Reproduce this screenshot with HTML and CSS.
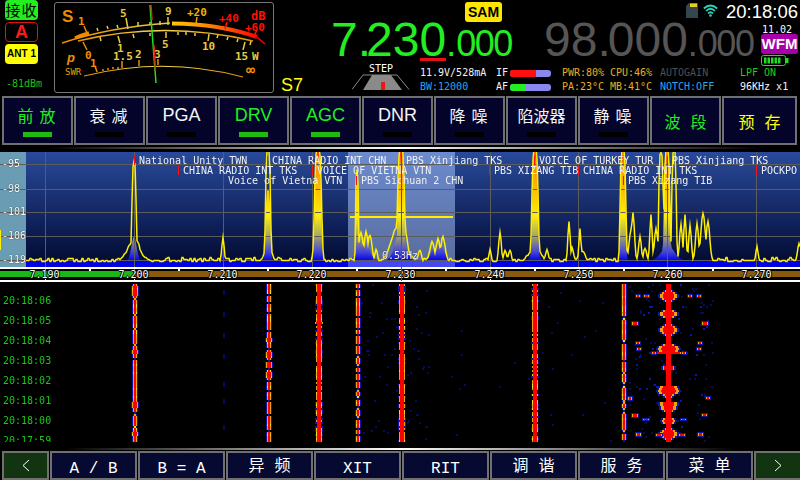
FILE: index.html
```html
<!DOCTYPE html>
<html lang="zh">
<head>
<meta charset="utf-8">
<title>SDR Transceiver</title>
<link rel="stylesheet" href="styles.css">
</head>
<body>
<div class="app">
  <header class="header">
    <div class="status">
      <div class="pill pill-rx">接收</div>
      <div class="pill pill-vfo">A</div>
      <div class="pill pill-ant">ANT 1</div>
      <div class="dbm">-81dBm</div>
    </div>
    <div class="meter">
      <svg class="meter-svg" viewBox="55 3 218 89" width="218" height="89">
        <defs>
          <linearGradient id="arcS" gradientUnits="userSpaceOnUse" x1="62" y1="0" x2="170" y2="0"><stop offset="0" stop-color="#f08a00"/><stop offset="1" stop-color="#e8d040"/></linearGradient>
          <linearGradient id="arcHot" gradientUnits="userSpaceOnUse" x1="172" y1="0" x2="258" y2="0"><stop offset="0" stop-color="#ffc800"/><stop offset="0.45" stop-color="#ff8000"/><stop offset="1" stop-color="#ff0000"/></linearGradient>
          <linearGradient id="arcP" gradientUnits="userSpaceOnUse" x1="78" y1="0" x2="253" y2="0"><stop offset="0" stop-color="#e89000"/><stop offset="0.45" stop-color="#f0d850"/><stop offset="1" stop-color="#e89000"/></linearGradient>
          <linearGradient id="arcSwr" gradientUnits="userSpaceOnUse" x1="84" y1="0" x2="243" y2="0"><stop offset="0" stop-color="#e89000"/><stop offset="0.5" stop-color="#f0d850"/><stop offset="1" stop-color="#e89000"/></linearGradient>
        </defs>
        <path class="a-s" d="M62 43 Q110 27 170 23"/>
        <path class="a-orange" d="M75 38 Q82 35 89 33"/>
        <path class="a-hot" d="M172 23.500 Q220 24 257 37"/>
        <path class="a-red" d="M257 37 L265 44"/>
        <path class="a-p" d="M78 41 Q165 20 253 41"/>
        <path class="a-swr" d="M84 76 Q165 56 243 77"/>
        <path class="t-orange" d="M87 33 L84 26 M83 42 L87 50"/>
        <path class="t-yellow" d="M128 29 L126 18 M168 25 L168 17 M160 25 L160 21 M150 25 L150 22 M98 31 L97 28 M108 29 L107 26 M118 28 L117 25 M138 26 L138 22 M118 36 L120 43 M166 32 L166 38 M100 37 L101 41 M133 34 L134 38 M150 33 L150 36"/>
        <path class="t-yellow" d="M178 32 L178 35 M186 32 L186 35 M195 33 L195 36 M209 34 L208 41 M218 35 L217 38 M228 37 L227 40 M238 39 L237 42 M245 42 L243 50 M251 41 L250 45"/>
        <path class="t-orange2" d="M196 24 L197 17"/>
        <path class="t-red" d="M225 29 L227 22 M253 38 L257 30"/>
        <path class="t-orange" d="M97 72 L95 66 M122 68 L122 61 M139 66 L139 60 M158 65 L158 59 M103 71 L103 69 M108 70 L108 68 M113 69 L113 67 M118 69 L118 67"/>
        <text class="m s-big" x="62" y="22">S</text>
        <text class="m or" x="78" y="25">1</text>
        <text class="m ye" x="120" y="17">5</text>
        <text class="m ye" x="165" y="15">9</text>
        <text class="m gold" x="187" y="16">+20</text>
        <text class="m red" x="219" y="22">+40</text>
        <text class="m red db" x="251" y="20">dB</text>
        <text class="m red" x="245" y="31">+60</text>
        <text class="m or p" x="67" y="62">p</text>
        <text class="m or" x="85" y="59">0</text>
        <text class="m ye" x="117" y="52">1</text>
        <text class="m ye" x="162" y="48">5</text>
        <text class="m ye" x="202" y="50">10</text>
        <text class="m ye" x="235" y="60">15</text>
        <text class="m ye" x="252" y="60">W</text>
        <text class="swr" x="65" y="75">SWR</text>
        <text class="m or" x="90" y="67">1</text>
        <text class="m ye" x="113" y="60">1.5</text>
        <text class="m ye" x="135" y="58">2</text>
        <text class="m ye" x="154" y="58">3</text>
        <text class="m or inf" x="246" y="75">∞</text>
        <path class="needle-g" d="M150 5 L156 83"/>
        <path class="needle-r" d="M151 5 L152 20 M154 45 L155.500 71"/>
      </svg>
    </div>
    <div class="panel">
      <div class="topline">
        <div class="mode-sam">SAM</div>
        <svg class="sd" viewBox="0 0 12 15" width="12" height="15"><path d="M3 0 H12 V15 H0 V3 Z" fill="#36464e"/><path d="M4 0.500 H11 V4 H4 Z" fill="#e8d020"/></svg>
        <svg class="wifi" viewBox="0 0 15 13" width="15" height="13"><g fill="none" stroke="#2fd2bd" stroke-width="1.700"><path d="M0.800 4.500 Q7.500 -1.500 14.200 4.500"/><path d="M3 7 Q7.500 2.500 12 7"/><path d="M5 9.500 Q7.500 7 10 9.500"/></g><circle cx="7.500" cy="11.500" r="1.300" fill="#2fd2bd"/></svg>
        <div class="clock">20:18:06</div>
      </div>
      <div class="freqline">
        <div class="freq freq-a"><span>7</span><span class="dot-a">.</span><span>23</span><span class="tuned">0</span><span class="sub"><span class="dot-sub">.</span>000</span></div>
        <div class="freq freq-b"><span>98</span><span class="dot-b">.</span><span>000</span><span class="sub"><span class="dot-sub">.</span>000</span></div>
        <div class="side">
          <div class="ver">11.02</div>
          <div class="mode-wfm">WFM</div>
          <svg class="battery" viewBox="0 0 28 11" width="28" height="11"><rect x="0.500" y="0.500" width="24" height="10" rx="2" fill="none" stroke="#22dd22"/><rect x="25" y="3" width="2.500" height="5" fill="#22dd22"/><g fill="#22dd22"><rect x="3" y="2.500" width="2.500" height="6"/><rect x="6.500" y="2.500" width="2.500" height="6"/><rect x="10" y="2.500" width="2.500" height="6"/><rect x="13.500" y="2.500" width="2.500" height="6"/><rect x="17" y="2.500" width="2.500" height="6"/></g></svg>
        </div>
      </div>
      <div class="infoline">
        <div class="s7">S7</div>
        <div class="step">
          <div class="step-label">STEP</div>
          <svg viewBox="0 0 58 16" width="58" height="16"><path d="M0 15.500 L11 1 H45 L57 15.500" fill="none" stroke="#888"/><path d="M11 16 L20 1 H39 L50 16 Z" fill="#8a8a8a"/><rect x="29" y="8" width="4" height="8" fill="#ff1010"/></svg>
        </div>
        <div class="stats">
          <span class="t-white">11.9V/528mA</span>
          <span class="t-white lvl">IF<i class="bar"><b class="seg-if"></b></i></span>
          <span class="t-gold">PWR:80%</span>
          <span class="t-gold">CPU:46%</span>
          <span class="t-dim">AUTOGAIN</span>
          <span class="t-green">LPF ON</span>
          <span class="t-blue">BW:12000</span>
          <span class="t-white lvl">AF<i class="bar"><b class="seg-af"></b></i></span>
          <span class="t-gold">PA:23°C</span>
          <span class="t-gold">MB:41°C</span>
          <span class="t-blue">NOTCH:OFF</span>
          <span class="t-white">96KHz x1</span>
        </div>
      </div>
    </div>
  </header>

  <nav class="keys">
    <button class="key on"><span class="cjk">前放</span><i class="ind"></i></button>
    <button class="key"><span class="cjk">衰减</span><i class="ind"></i></button>
    <button class="key"><span class="latin">PGA</span><i class="ind"></i></button>
    <button class="key on"><span class="latin">DRV</span><i class="ind"></i></button>
    <button class="key on"><span class="latin">AGC</span><i class="ind"></i></button>
    <button class="key"><span class="latin">DNR</span><i class="ind"></i></button>
    <button class="key"><span class="cjk">降噪</span><i class="ind"></i></button>
    <button class="key"><span class="cjk tight">陷波器</span><i class="ind"></i></button>
    <button class="key"><span class="cjk">静噪</span><i class="ind"></i></button>
    <button class="key plain key-band"><span class="cjk wide">波段</span></button>
    <button class="key plain key-preset"><span class="cjk wide">预存</span></button>
  </nav>
  <div class="fade"></div>

  <section class="scope">
    <div class="spectrum">
      <canvas id="spec" width="800" height="116"></canvas>
      <div class="lvl-lab l1">-95</div>
      <div class="lvl-lab l2">-98</div>
      <div class="lvl-lab l3">-101</div>
      <div class="lvl-lab l4">-106</div>
      <div class="lvl-lab l5">-119</div>
      <div class="st r1 c134">National Unity TWN</div>
      <div class="st r1 c267">CHINA RADIO INT CHN</div>
      <div class="st r1 c401">PBS Xinjiang TKS</div>
      <div class="st r1 c534">VOICE OF TURKEY TUR</div>
      <div class="st r1 c667">PBS Xinjiang TKS</div>
      <div class="st r2 c178">CHINA RADIO INT TKS</div>
      <div class="st r2 c312">VOICE OF VIETNA VTN</div>
      <div class="st r2 c489">PBS XIZANG TIB</div>
      <div class="st r2 c578">CHINA RADIO INT TKS</div>
      <div class="st r2 c756">POCKPO</div>
      <div class="st r3 c223">Voice of Vietna VTN</div>
      <div class="st r3 c356">PBS Sichuan 2 CHN</div>
      <div class="st r3 c623">PBS Xizang TIB</div>
      <div class="offset">0.58Hz</div>
    </div>
    <div class="scale">
      <div class="scale-band"></div>
      <div class="scale-labels">
        <span>7.190</span><span>7.200</span><span>7.210</span><span>7.220</span><span>7.230</span><span>7.240</span><span>7.250</span><span>7.260</span><span>7.270</span>
      </div>
    </div>
    <div class="cursor"></div>
  </section>

  <section class="waterfall">
    <canvas id="fall" width="800" height="158"></canvas>
    <div class="times">
      <span>20:18:06</span><span>20:18:05</span><span>20:18:04</span><span>20:18:03</span><span>20:18:02</span><span>20:18:01</span><span>20:18:00</span><span>20:17:59</span>
    </div>
  </section>
  <div class="fade fade-low"></div>

  <nav class="softkeys">
    <button class="soft nav"><svg viewBox="0 0 8 13" width="8" height="13"><path d="M7 1 L1 6.500 L7 12" fill="none" stroke="#fff"/></svg></button>
    <button class="soft">A / B</button>
    <button class="soft">B = A</button>
    <button class="soft cjk-soft">异频</button>
    <button class="soft">XIT</button>
    <button class="soft">RIT</button>
    <button class="soft cjk-soft">调谐</button>
    <button class="soft cjk-soft">服务</button>
    <button class="soft cjk-soft">菜单</button>
    <button class="soft nav nav-r"><svg viewBox="0 0 8 13" width="8" height="13"><path d="M1 1 L7 6.500 L1 12" fill="none" stroke="#fff"/></svg></button>
  </nav>
</div>
<script src="script.js"></script>
</body>
</html>
```
FILE: styles.css
```css
* { box-sizing: border-box; margin: 0; padding: 0; }
html, body { width: 800px; height: 480px; overflow: hidden; background: #000; }
body { font-family: "DejaVu Sans Mono", monospace; font-size: 10px; line-height: 10px; color: #fff; }
.app { width: 800px; height: 480px; display: flex; flex-direction: column; overflow: hidden; }
button { font: inherit; color: inherit; }
canvas { display: block; }

/* header */
.header { height: 95px; display: flex; flex: none; }
.status { width: 54px; flex: none; padding-left: 5px; display: flex; flex-direction: column; }
.pill { width: 33px; height: 20px; border-radius: 4px; display: flex; align-items: center; justify-content: center; margin-bottom: 2px; }
.pill-rx { background: #22ee22; color: #000; font: 15px/20px "Noto Sans CJK SC", sans-serif; letter-spacing: 1px; }
.pill-vfo { border: 1px solid #e01010; color: #ff1818; font: bold 18px/18px "Liberation Sans", sans-serif; }
.pill-ant { background: #ffff00; color: #000; font: bold 10px/20px "Liberation Sans", sans-serif; }
.dbm { color: #18c018; margin-top: 13px; margin-left: 1px; }
.meter { width: 220px; height: 91px; margin-top: 2px; flex: none; border: 1px solid #777; border-radius: 3px; }
.meter-svg { display: block; }
.meter-svg path { fill: none; }
.a-s { stroke: url(#arcS); stroke-width: 1.5; }
.a-orange { stroke: #f08a00; stroke-width: 3.5; }
.a-hot { stroke: url(#arcHot); stroke-width: 4; }
.a-red { stroke: #ff0000; stroke-width: 1.5; }
.a-p { stroke: url(#arcP); stroke-width: 1.5; }
.a-swr { stroke: url(#arcSwr); stroke-width: 1.2; }
.t-orange { stroke: #e89000; stroke-width: 1.5; }
.t-yellow { stroke: #e8cc40; stroke-width: 1.5; }
.t-orange2 { stroke: #f0a000; stroke-width: 1.5; }
.t-red { stroke: #ff1000; stroke-width: 1.5; }
.m { font: bold 11px "DejaVu Sans Mono", monospace; }
.or { fill: #f09000; }
.ye { fill: #e8c840; }
.gold { fill: #f0b000; }
.red { fill: #ff1000; }
.s-big { font: bold 17px "Liberation Sans", sans-serif; fill: #e88c00; }
.db { font-size: 12px; }
.p { font: italic bold 13px "Liberation Sans", sans-serif; }
.inf { font-size: 15px; }
.swr { font: 9px "DejaVu Sans Mono", monospace; fill: #e8a000; }
.needle-g { stroke: #22dd22; stroke-width: 1.5; }
.needle-r { stroke: #e82010; stroke-width: 1.5; }

.panel { flex: 1; display: flex; flex-direction: column; min-width: 0; }
.topline { height: 22px; display: flex; align-items: flex-start; padding-left: 191px; flex: none; }
.mode-sam { width: 37px; height: 20px; margin-top: 2px; background: #ffe600; color: #000; border-radius: 3px; font: bold 14px/20px "Liberation Sans", sans-serif; text-align: center; }
.sd { margin: 3px 0 0 184px; display: block; }
.wifi { margin: 4px 0 0 5px; display: block; }
.clock { margin: 2px 0 0 8px; font: 18.500px/20px "Liberation Sans", sans-serif; white-space: nowrap; }

.freqline { height: 44px; display: flex; flex: none; }
.freq { font: 48px/35px "Liberation Sans", sans-serif; white-space: nowrap; }
.freq-a { color: #22ee22; width: 213px; margin-left: 57px; }
.freq-b { color: #555; width: 217px; }
.dot-a { letter-spacing: -5px; }
.dot-b { letter-spacing: -3px; }
.sub { font-size: 36px; letter-spacing: -1.500px; }
.dot-sub { letter-spacing: 0; }
.tuned { position: relative; }
.tuned::after { content: ""; position: absolute; left: 1px; right: 0; top: 45px; height: 3px; background: #e81010; }
.side { width: 38px; display: flex; flex-direction: column; align-items: flex-start; }
.ver { height: 12px; padding: 3px 0 0 1px; }
.mode-wfm { width: 37px; height: 20px; background: #a800a8; border-radius: 3px; font: bold 15px/20px "Liberation Sans", sans-serif; text-align: center; }
.battery { margin-top: 1px; display: block; }

.infoline { flex: 1; display: flex; min-height: 0; }
.s7 { width: 78px; padding: 9px 0 0 7px; color: #ffff10; font: 18px/20px "Liberation Sans", sans-serif; flex: none; }
.step { width: 58px; flex: none; text-align: center; margin-top: -3px; }
.step-label { height: 11px; padding-top: 1px; }
.step svg { display: block; }
.stats { margin-left: 10px; display: grid; grid-template-columns: 76px 66px 48px 50px 80px auto; grid-template-rows: 14px 14px; align-items: center; white-space: nowrap; }
.t-white { color: #f4f4f4; }
.t-gold { color: #e8b020; }
.t-dim { color: #505050; }
.t-green { color: #18d018; }
.t-blue { color: #20a8f0; }
.lvl { display: flex; align-items: center; gap: 2px; }
.bar { width: 41px; height: 7px; border-radius: 3px; background: #8a88ee; overflow: hidden; display: block; }
.bar b { display: block; height: 7px; }
.seg-if { width: 26px; background: #ff1010; }
.seg-af { width: 16px; background: #22ee22; }

/* key row */
.keys { height: 50px; padding: 1px 0 0 2px; display: flex; gap: 1px; flex: none; }
.key { width: 71px; height: 49px; flex: none; border: 2px solid #707070; background: #04042a; color: #f4f4f4; display: flex; flex-direction: column; align-items: center; padding-top: 8px; }
.key.on { color: #20ee20; }
.key .cjk { font: 16px/18px "Noto Sans CJK SC", sans-serif; letter-spacing: 6px; height: 18px; padding-left: 4px; }
.key .cjk.tight { letter-spacing: 0; padding-left: 0; }
.key .latin { font: 18px/18px "Liberation Sans", sans-serif; height: 18px; }
.ind { width: 29px; height: 5px; background: #000; margin-top: 8px; display: block; }
.on .ind { background: #20bb10; }
.key.plain { justify-content: center; padding-top: 0; }
.key .cjk.wide { letter-spacing: 10px; padding-left: 10px; }
.key-band { color: #20ee20; }
.key-preset { color: #ffff10; width: 75px; }
.fade { height: 2px; margin: 2px 0 3px; flex: none; background: linear-gradient(90deg, #000 6%, #fff 50%, #000 95%); }

/* spectrum */
.scope { position: relative; flex: none; height: 130px; }
.spectrum { position: relative; height: 115px; overflow: hidden; }
.lvl-lab { position: absolute; left: 2px; height: 10px; text-shadow: 0 0 1px #000; }
.l1 { top: 7px; } .l2 { top: 32px; } .l3 { top: 55px; } .l4 { top: 79px; } .l5 { top: 103px; }
.st { position: absolute; white-space: nowrap; color: #f0f0f0; height: 10px; padding-left: 5px; }
.st::before { content: ""; position: absolute; left: 0; top: 0; width: 1px; height: 9px; background: #ff1010; }
.r1 { top: 4px; } .r2 { top: 14px; } .r3 { top: 24px; }
.c134 { left: 134px; } .c267 { left: 267px; } .c401 { left: 401px; } .c534 { left: 534px; } .c667 { left: 667px; }
.c178 { left: 178px; } .c312 { left: 312px; } .c489 { left: 489px; } .c578 { left: 578px; } .c756 { left: 756px; }
.c223 { left: 223px; } .c356 { left: 356px; } .c623 { left: 623px; }
.offset { position: absolute; left: 382px; top: 99px; color: #f0f0f0; text-shadow: 0 0 1px #223; }
.scale { height: 15px; position: relative; border-top: 2px solid #fff; border-bottom: 2px solid #fff; background:
  repeating-linear-gradient(90deg, #fff 0 1px, transparent 1px 44.500px) 45px 0 / 100% 2px no-repeat; }
.scale::after { content: ""; position: absolute; left: 45px; right: 0; bottom: 0; height: 2px; background: repeating-linear-gradient(90deg, #fff 0 1px, transparent 1px 89px); }
.scale-band { position: absolute; left: 0; right: 0; top: 2px; height: 6px; background: linear-gradient(90deg, #18b818 0 133px, #8a5a0c 133px); }
.scale-labels { position: relative; display: flex; height: 11px; align-items: center; z-index: 1; }
.scale-labels span { width: 89px; flex: none; text-align: center; text-shadow: 1px 0 0 #000, -1px 0 0 #000, 0 1px 0 #000, 0 -1px 0 #000; }
.cursor { position: absolute; left: 401px; top: 0; bottom: 1px; width: 1px; background: #ff1010; z-index: 2; }

/* waterfall */
.waterfall { position: relative; height: 158px; margin-top: 2px; flex: none; overflow: hidden; }
.times { position: absolute; left: 3px; top: 12px; display: flex; flex-direction: column; gap: 10px; color: #18c818; }
.times span { height: 10px; display: block; }
.fade-low { margin: 6px 0 1px; background: linear-gradient(90deg, #000 8%, #fff 50%, #000 92%); }

/* soft keys */
.softkeys { height: 29px; padding-left: 2px; display: flex; gap: 1px; flex: none; }
.soft { width: 87px; height: 29px; flex: none; border: 2px solid #707070; background: #060a30; color: #fff; font: 16px/24px "Liberation Mono", monospace; padding-top: 4px; text-align: center; }
.cjk-soft { font: 16px/20px "Noto Sans CJK SC", sans-serif; letter-spacing: 10px; padding: 0 0 3px 10px; }
.nav { width: 47px; background: #133410; display: flex; align-items: center; justify-content: center; padding: 0; }
.nav-r { width: 48px; }
.nav svg { display: block; }
```
FILE: script.js
```js
(function () {
  var seed = 20180;
  function rnd() {
    seed |= 0; seed = seed + 0x6D2B79F5 | 0;
    var t = Math.imul(seed ^ seed >>> 15, 1 | seed);
    t = t + Math.imul(t ^ t >>> 7, 61 | t) ^ t;
    return ((t ^ t >>> 14) >>> 0) / 4294967296;
  }

  /* spectrum */
  var spec = document.getElementById('spec').getContext('2d');
  var OY = 152; /* page y of canvas top */
  var bg = spec.createLinearGradient(0, 0, 0, 116);
  bg.addColorStop(0, '#284a9c'); bg.addColorStop(0.33, '#1c3476');
  bg.addColorStop(0.7, '#0c1c52'); bg.addColorStop(1, '#010828');
  spec.fillStyle = bg; spec.fillRect(0, 0, 800, 116);
  spec.fillStyle = '#6a9db3'; spec.fillRect(0, 0, 26, 116);
  spec.fillStyle = 'rgba(170,200,255,0.52)'; spec.fillRect(348, 0, 107, 116);

  var yellow = [[134,162,2.4],[134,238,8],[223,237,1.6],[268,148,2.8],[268,240,4],[318,148,4],[357,170,1.6],[361,232,3],[366,232,2.6],[370,234,2.6],
    [376,250,2],[401,148,4],[398,226,9],[405,232,3.5],[420,250,2],[432,241,3],[438,238,3],[443,237,3],[490,250,1.5],[500,233,1.8],[505,249,2],[510,250,2],
    [535,148,3.6],[535,245,7],[547,248,2],[569,220,1.6],[572,248,2],[580,228,1.3],[582,250,4],[623,148,3.2],[633,213,2],[631,228,2.5],[640,237,1.8],[651,215,1.6],[656,228,2.2],[661,152,2.6],
    [667,148,3.2],[674,150,2.6],[685,213,1.6],[681,225,2],[690,224,1.8],[697,223,2],[703,213,3],[708,222,2.5],[645,248,2],[757,247,1.5],[799,242,2]];
  var fill = [[134,236,3.5],[223,250,1.2],[268,190,3],[318,146,3.6],[357,170,1.5],[363,236,7],[401,146,3.6],[400,232,7],[438,240,7],[535,146,3.2],[535,240,4],[623,146,3],[667,146,3.4],[668,246,9]];
  function profile(list, floor, jit) {
    var out = [], last = 0;
    for (var x = 0; x <= 800; x++) {
      if (x % 2 === 0) last = (rnd() - 0.5) * jit;
      var y = floor + last;
      for (var i = 0; i < list.length; i++) {
        var p = list[i], d = (x - p[0]) / p[2];
        var d2 = d * d;
        var shape = p[1] < 200 ? Math.exp(-d2 * d2) : Math.exp(-d2);
        var v = floor - (floor - p[1]) * shape + last * 0.5;
        if (v < y) y = v;
      }
      out.push(y);
    }
    return out;
  }
  var fy = profile(fill, 260.5, 1);
  var grad = spec.createLinearGradient(0, 0, 0, 116);
  [[0,'#ff2000'],[0.1,'#ff8800'],[0.33,'#ffbe00'],[0.55,'#ffee10'],[0.72,'#a8a860'],[0.86,'#4646d8'],[0.94,'#0000e4']].forEach(function (c) { grad.addColorStop(c[0], c[1]); });
  spec.fillStyle = grad;
  spec.beginPath(); spec.moveTo(26, 116);
  for (var x = 26; x <= 800; x++) spec.lineTo(x, fy[x] - OY);
  spec.lineTo(800, 116); spec.closePath(); spec.fill();
  spec.fillStyle = 'rgba(150,160,255,0.45)'; spec.fillRect(348, 108, 107, 8);

  spec.fillStyle = '#5c5c5c';
  [164,189,212,236,260].forEach(function (y) { spec.fillRect(0, y - OY, 800, 1); });
  [45,134,223,312,401,490,578,667,756].forEach(function (x) { spec.fillRect(x, 0, 1, 116); });

  var ty = profile(yellow, 260, 5.5);
  spec.strokeStyle = '#ffee00'; spec.lineWidth = 1.5; spec.beginPath();
  for (x = 26; x <= 800; x++) { var yy = Math.round(ty[x] - OY) + 0.5; if (x === 26) spec.moveTo(x, yy); else spec.lineTo(x, yy); }
  spec.stroke();
  spec.fillStyle = '#ffee00'; spec.fillRect(350, 64, 103, 2);
  spec.fillRect(0, 78, 1, 20);

  /* waterfall */
  var w = document.getElementById('fall').getContext('2d');
  w.fillStyle = '#000'; w.fillRect(0, 0, 800, 158);
  var BLUE = '#0818a8', OR = '#f0a010', YE = '#e8e020', RED = '#ff0000', DIM = '#040c60';
  function row(c, y, hw, h, solid) {
    /* one row of a trace: blue skirt, warm edge, red core, all centred on c */
    var q = Math.round(hw);
    if (!solid || rnd() < 0.3) { w.fillStyle = BLUE; w.fillRect(c - q - 2, y, 2 * q + 4, h); }
    if (!solid || rnd() < 0.7) { w.fillStyle = rnd() > 0.25 ? OR : YE; w.fillRect(c - q - 1, y, 2 * q + 2, h); }
    if (q > 0) { w.fillStyle = RED; w.fillRect(c - q, y, 2 * q, h); }
  }
  function carrier(c, minLen, varLen, rMax, rMin, gapChance) {
    var y = 0;
    while (y < 158) {
      var len = (minLen + Math.floor(rnd() * varLen)) * 2;
      var peak = rMin + (rMax - rMin) * rnd();
      for (var k = 0; k < len && y + k < 158; k += 2) {
        var t = Math.sin(Math.PI * (k + 1) / len);
        row(c, y + k, gapChance > 0 ? peak * Math.sqrt(t) : Math.max(rMin, peak * t), 2, gapChance === 0);
      }
      y += len;
      if (rnd() < gapChance) {
        w.fillStyle = BLUE; w.fillRect(c - 1, y, 2, 2);
        y += 2;
      }
    }
  }
  function specks(x0, x1, n, c) {
    w.fillStyle = c;
    for (var i = 0; i < n; i++) w.fillRect(Math.round(x0 + rnd() * (x1 - x0)), Math.floor(rnd() * 79) * 2, 2, 2);
  }
  specks(360, 400, 34, DIM); specks(405, 428, 30, DIM); specks(520, 560, 10, DIM); specks(440, 520, 8, DIM); specks(560, 620, 8, DIM);
  specks(628, 712, 90, DIM); specks(630, 708, 30, BLUE);
  w.fillStyle = DIM;
  for (var a = 0; a < 7; a++) w.fillRect(223, 4 + a * 22 + Math.floor(rnd() * 10), 2, 5);

  carrier(135, 4, 7, 2.2, 0.8, 0.5);
  carrier(269, 3, 6, 2.2, 0.9, 0.9);
  carrier(319, 10, 10, 2.6, 2.4, 0);
  carrier(358, 2, 4, 1.5, 0.6, 0.9);
  carrier(402, 4, 8, 2.2, 1.8, 0);
  carrier(535, 4, 8, 2.2, 1.8, 0);
  carrier(624, 3, 10, 1.4, 0.6, 0.5);

  /* carrier with sidebands */
  var lobes = [[11,8,5],[29,9,4],[45,8,5],[64,10,5],[68,17,1],[83,7,2],[103,14,1.4],[106,10,5],[110,4,3],[119,16,1.2],[123,7,4],[136,6,4],[149,8,5]];
  for (var ly = 0; ly < 158; ly += 2) {
    var hw = 0;
    lobes.forEach(function (l) { var d = (ly - l[0]) / l[2]; hw = Math.max(hw, l[1] * Math.exp(-d * d)); });
    if (hw > 2.5) {
      var ch = Math.round(hw);
      w.fillStyle = BLUE; w.fillRect(668 - ch - 2, ly, 2 * ch + 5, 2);
      w.fillStyle = OR; w.fillRect(668 - ch, ly, 2 * ch + 1, 2);
      var core = Math.round(hw * 0.65);
      w.fillStyle = RED; w.fillRect(668 - core, ly, 2 * core + 1, 2);
    }
  }
  w.fillStyle = RED; w.fillRect(666, 0, 5, 158);

  function blob(x, y, ww, h) {
    w.fillStyle = BLUE; w.fillRect(x - 2, y - 1, ww + 4, h + 2);
    w.fillStyle = OR; w.fillRect(x - 1, y, ww + 2, h);
    w.fillStyle = RED; w.fillRect(x, y, ww, h);
  }
  [[633,38,4,3],[703,38,4,3],[637,11,2,2],[645,11,3,2],[698,11,2,2],[689,11,2,2],[637,58,2,2],[638,64,2,2],[699,58,2,2],[698,64,2,2],[653,68,2,2],[683,68,2,2],[629,113,2,3],[707,113,2,2],[633,130,4,3],[703,130,3,2],[644,135,4,1],[682,135,3,1],[637,149,3,3],[657,150,4,2],[680,150,4,2],[699,149,3,3]].forEach(function (b) {
    blob(b[0], b[1], b[2], b[3]);
  });
})();
```
